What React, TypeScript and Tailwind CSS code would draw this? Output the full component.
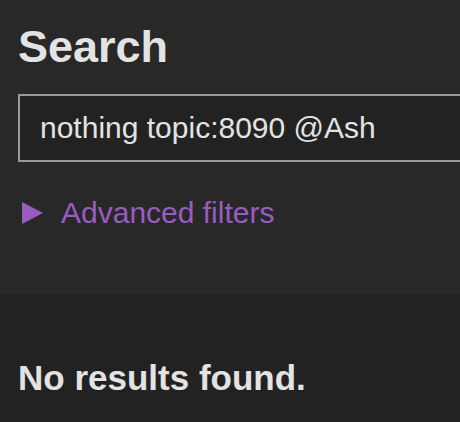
export default function App() {
  return (
    <div className="w-[460px] h-[422px] overflow-hidden font-['Liberation_Sans',Arial,sans-serif] text-[#e3e3e3]">
      {/* search form */}
      <section className="h-[294px] bg-[#282828] pl-[18px] pt-[24px]">
        <h1 className="text-[45px] font-bold leading-[45px]">Search</h1>
        <input
          type="text"
          readOnly
          defaultValue="nothing topic:8090 @Ash"
          className="mt-[25px] block h-[68px] w-[500px] border-2 border-[#9a9a9a] bg-[#222222] pl-[20px] text-[30px] text-[#e3e3e3] outline-none"
        />
        <div className="mt-[36px] flex items-start gap-[18px] text-[#9a5cc0]">
          <svg
            className="ml-[4px] mt-[4px] h-[22px] w-[21px] shrink-0"
            viewBox="0 0 21 22"
            fill="currentColor"
          >
            <polygon points="0,0 21,11 0,22" />
          </svg>
          <span className="text-[30px] leading-[30px]">Advanced filters</span>
        </div>
      </section>

      {/* results */}
      <section className="h-[128px] bg-[#222222] pl-[18px] pt-[66px]">
        <p className="text-[35px] font-bold leading-[35px]">No results found.</p>
      </section>
    </div>
  );
}
